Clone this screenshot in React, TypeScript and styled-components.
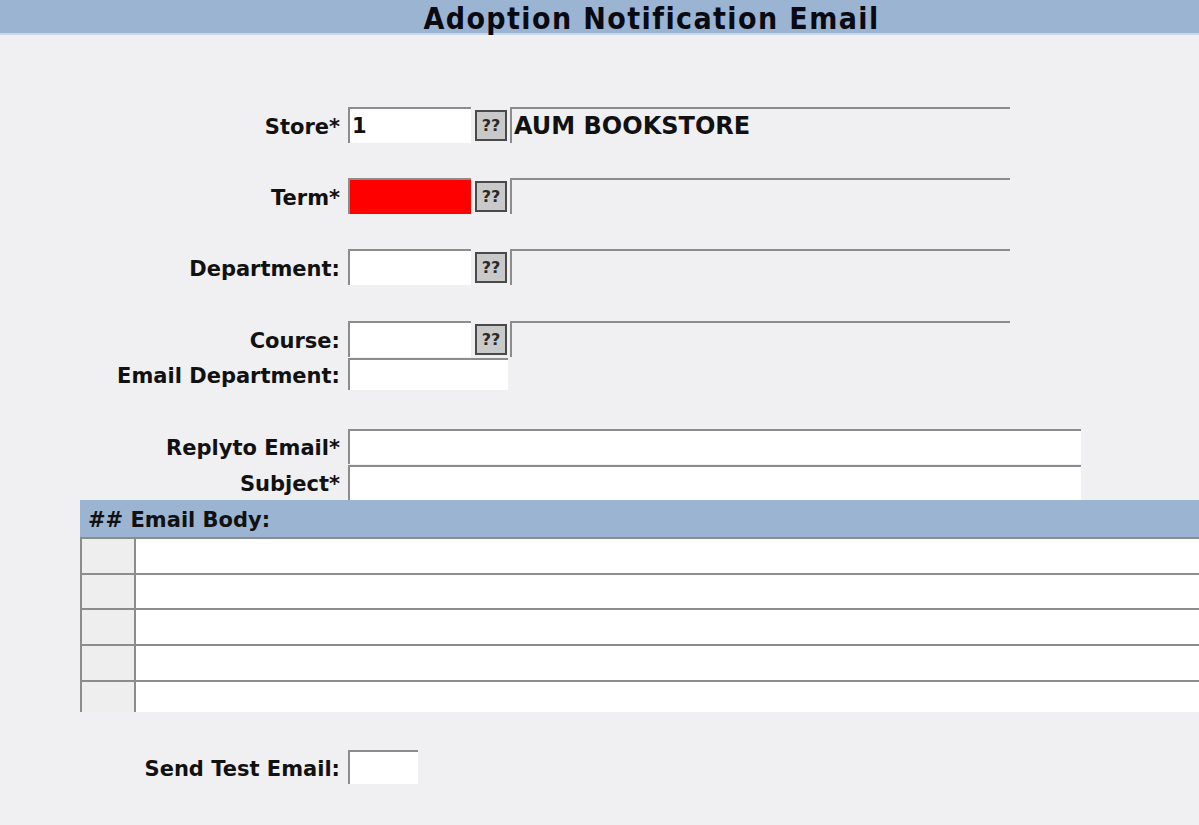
import React, { FC } from 'react';
import styled, { createGlobalStyle } from 'styled-components';

const GlobalStyle = createGlobalStyle`
  html, body {
    margin: 0;
    padding: 0;
    background: #f0eff1;
  }
  body {
    font-family: "DejaVu Sans", Verdana, sans-serif;
    color: #111;
  }
`;

const Page = styled.div`
  width: 1199px;
  height: 825px;
  overflow: hidden;
  background: #f0eff1;
`;

const TitleBar = styled.div`
  height: 33px;
  background: #9bb4d2;
  border-bottom: 2px solid #c9d8e8;
  display: flex;
  justify-content: center;
  align-items: center;
  padding-left: 104px;
`;

const Title = styled.h1`
  margin: 0;
  font-family: "DejaVu Sans Condensed", "DejaVu Sans", sans-serif;
  font-weight: bold;
  font-size: 30px;
  letter-spacing: 1.4px;
  line-height: 33px;
  padding-top: 3px;
  color: #0a0a12;
`;

const Form = styled.div`
  display: flex;
  flex-direction: column;
  padding-top: 72px;
`;

const Row = styled.div<{ $gap?: number; $height?: number }>`
  display: flex;
  align-items: center;
  height: ${(p) => p.$height ?? 36}px;
  margin-top: ${(p) => p.$gap ?? 0}px;
`;

const Label = styled.label`
  width: 348px;
  padding-right: 8px;
  padding-top: 3px;
  box-sizing: border-box;
  text-align: right;
  font-weight: bold;
  font-size: 21px;
  white-space: nowrap;
`;

const Field = styled.div<{ $width: number; $bad?: boolean }>`
  width: ${(p) => p.$width}px;
  height: 100%;
  box-sizing: border-box;
  background: ${(p) => (p.$bad ? '#ff0000' : '#ffffff')};
  border-top: 2px solid #8c8c8c;
  border-left: 2px solid #8c8c8c;
  font-weight: bold;
  font-size: 21px;
  line-height: 35px;
  padding-left: 2px;
`;

const Lookup = styled.button`
  width: 32px;
  height: 31px;
  margin-left: 4px;
  padding: 0;
  box-sizing: border-box;
  background: #c9c9c9;
  border: 2px solid #4a4a4a;
  font-family: "DejaVu Sans", Verdana, sans-serif;
  font-weight: bold;
  font-size: 16px;
  color: #2a2a2a;
`;

const Description = styled.div`
  width: 500px;
  height: 100%;
  margin-left: 3px;
  box-sizing: border-box;
  border-top: 2px solid #8c8c8c;
  border-left: 2px solid #8c8c8c;
  font-weight: bold;
  font-size: 24px;
  line-height: 35px;
  padding-left: 2px;
  white-space: nowrap;
`;

const BodySection = styled.div`
  margin-left: 80px;
  width: 1119px;
  display: flex;
  flex-direction: column;
`;

const BodyHeader = styled.div`
  height: 37px;
  background: #9bb4d2;
  font-weight: bold;
  font-size: 21px;
  line-height: 40px;
  padding-left: 8px;
  box-sizing: border-box;
`;

const BodyRow = styled.div<{ $height: number }>`
  display: grid;
  grid-template-columns: 54px 1fr;
  height: ${(p) => p.$height}px;
`;

const LineNo = styled.div`
  background: #eeeeee;
  border-top: 2px solid #8c8c8c;
  border-left: 2px solid #8c8c8c;
`;

const LineText = styled.div`
  background: #ffffff;
  border-top: 2px solid #8c8c8c;
  border-left: 2px solid #8c8c8c;
`;

const lookups = [
  { label: 'Store*', value: '1', desc: 'AUM BOOKSTORE', gap: 0 },
  { label: 'Term*', value: '', desc: '', gap: 35, bad: true },
  { label: 'Department:', value: '', desc: '', gap: 35 },
  { label: 'Course:', value: '', desc: '', gap: 36 },
];

const bodyRows = [36, 35, 36, 36, 32];

const App: FC = () => {
  return (
    <Page>
      <GlobalStyle />
      <TitleBar>
        <Title>Adoption Notification Email</Title>
      </TitleBar>
      <Form>
        {lookups.map((l) => (
          <Row key={l.label} $gap={l.gap}>
            <Label>{l.label}</Label>
            <Field $width={123} $bad={l.bad}>{l.value}</Field>
            <Lookup>??</Lookup>
            <Description>{l.desc}</Description>
          </Row>
        ))}
        <Row $gap={1} $height={32}>
          <Label>Email Department:</Label>
          <Field $width={160} />
        </Row>
        <Row $gap={39} $height={35}>
          <Label>Replyto Email*</Label>
          <Field $width={733} />
        </Row>
        <Row $gap={1} $height={35}>
          <Label>Subject*</Label>
          <Field $width={733} />
        </Row>
        <BodySection>
          <BodyHeader>## Email Body:</BodyHeader>
          {bodyRows.map((h, i) => (
            <BodyRow key={i} $height={h}>
              <LineNo />
              <LineText />
            </BodyRow>
          ))}
        </BodySection>
        <Row $gap={38} $height={34}>
          <Label>Send Test Email:</Label>
          <Field $width={70} />
        </Row>
      </Form>
    </Page>
  );
};

export default App;
